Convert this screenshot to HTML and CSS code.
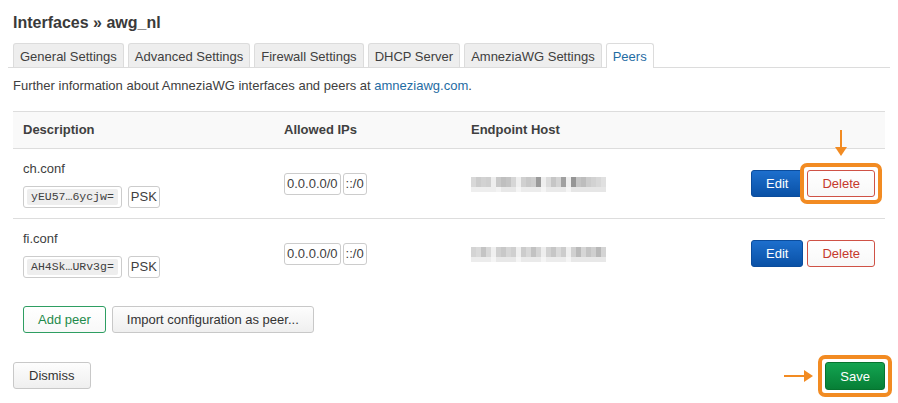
FILE: index.html
```html
<!DOCTYPE html>
<html>
<head>
<meta charset="utf-8">
<link rel="stylesheet" href="styles.css">
</head>
<body>
<div class="page">
  <h2 class="title">Interfaces » awg_nl</h2>
  <ul class="tabs">
    <li class="tab">General Settings</li>
    <li class="tab">Advanced Settings</li>
    <li class="tab">Firewall Settings</li>
    <li class="tab">DHCP Server</li>
    <li class="tab">AmneziaWG Settings</li>
    <li class="tab active">Peers</li>
  </ul>
  <p class="desc">Further information about AmneziaWG interfaces and peers at <a class="link" href="#">amneziawg.com</a>.</p>
  <table class="peers">
    <colgroup>
      <col class="c1"><col class="c2"><col class="c3"><col class="c4">
    </colgroup>
    <thead>
      <tr><th>Description</th><th>Allowed IPs</th><th>Endpoint Host</th><th></th></tr>
    </thead>
    <tbody>
      <tr>
        <td>
          <div class="peer-name">ch.conf</div>
          <div class="peer-keys"><span class="badge key"><code class="code">yEU57…6ycjw=</code></span><span class="badge">PSK</span></div>
        </td>
        <td><span class="ips"><span class="badge">0.0.0.0/0</span><span class="badge">::/0</span></span></td>
        <td><span class="blur blur-a"></span></td>
        <td class="actions-cell">
          <div class="row-actions">
            <button class="btn btn-edit">Edit</button>
            <span class="hl">
              <svg class="arrow-down" width="14" height="27" viewBox="0 0 14 27"><rect x="6" y="0" width="2" height="18" fill="#f28b22"/><polygon points="1,17 13,17 7,26" fill="#f28b22"/></svg>
              <span class="hl-box"></span>
              <button class="btn btn-delete">Delete</button>
            </span>
          </div>
        </td>
      </tr>
      <tr>
        <td>
          <div class="peer-name">fi.conf</div>
          <div class="peer-keys"><span class="badge key"><code class="code">AH4Sk…URv3g=</code></span><span class="badge">PSK</span></div>
        </td>
        <td><span class="ips"><span class="badge">0.0.0.0/0</span><span class="badge">::/0</span></span></td>
        <td><span class="blur blur-b"></span></td>
        <td class="actions-cell">
          <div class="row-actions">
            <button class="btn btn-edit">Edit</button>
            <button class="btn btn-delete">Delete</button>
          </div>
        </td>
      </tr>
    </tbody>
  </table>
  <div class="table-actions">
    <button class="btn btn-add">Add peer</button>
    <button class="btn btn-default">Import configuration as peer...</button>
  </div>
  <div class="footer">
    <button class="btn btn-default btn-dismiss">Dismiss</button>
    <span class="hl">
      <svg class="arrow-right" width="30" height="12" viewBox="0 0 30 12"><rect x="0" y="5" width="21" height="2" fill="#f28b22"/><polygon points="20,0 20,12 29,6" fill="#f28b22"/></svg>
      <span class="hl-box"></span>
      <button class="btn btn-save">Save</button>
    </span>
  </div>
</div>
</body>
</html>
```
FILE: styles.css
```css
* { box-sizing: border-box; }
html { overflow: hidden; }
html, body { margin: 0; padding: 0; background: #fff; }
body {
  font-family: "Liberation Sans", Arial, sans-serif;
  font-size: 13px;
  color: #404040;
}
.page { margin: 0 8px; padding-top: 13px; padding-bottom: 8px; }
.title {
  margin: 0 0 10px;
  padding: 0 5px;
  font-size: 16px;
  line-height: 20px;
  font-weight: bold;
  color: #3a3a3a;
}
.tabs {
  list-style: none;
  margin: 0;
  padding: 0 5px;
  display: flex;
  gap: 4px;
  border-bottom: 1px solid #dcdcdc;
}
.tab {
  background: #eeeeee;
  border: 1px solid #dcdcdc;
  border-bottom: none;
  border-radius: 3px 3px 0 0;
  padding: 5px 6px 2px;
  line-height: 16px;
  color: #404040;
}
.tab.active {
  background: #fff;
  color: #1f6ca3;
  margin-bottom: -1px;
  padding-bottom: 3px;
}
.desc {
  margin: 9px 5px 16px;
  line-height: 18px;
}
.link { color: #1f6ca3; text-decoration: none; }
.peers {
  margin: 0 5px;
  width: calc(100% - 10px);
  border-collapse: collapse;
  table-layout: fixed;
}
.c1 { width: 261px; }
.c2 { width: 187px; }
.c3 { width: 280px; }
.peers th {
  background: #f9f9f9;
  border-top: 1px solid #dddddd;
  padding: 10px;
  line-height: 16px;
  text-align: left;
  font-weight: bold;
}
.peers td {
  border-top: 1px solid #dddddd;
  padding: 10px;
  vertical-align: middle;
}
.peer-name { line-height: 20px; }
.peer-keys { display: flex; gap: 6px; margin-top: 7px; }
.badge {
  display: inline-block;
  border: 1px solid #cccccc;
  border-radius: 3px;
  padding: 2px;
  line-height: 16px;
  background: #fff;
}
.badge.key { padding: 2px 3px; }
.code {
  display: block;
  font-family: "Liberation Mono", "Courier New", monospace;
  font-size: 11.5px;
  line-height: 16px;
  background: #eeeeee;
  border-radius: 2px;
  padding: 0 4px;
  color: #404040;
}
.ips { display: inline-flex; gap: 2px; vertical-align: middle; }
.blur {
  display: inline-block;
  vertical-align: middle;
  width: 135px;
  height: 15px;
  background-repeat: no-repeat;
  background-size: 100% 10px, 100% 5px;
  background-position: top left, bottom left;
}
.blur-a {
  background-image:
    linear-gradient(to right, #d8d8d8 0 5px, #cccccc 5px 10px, #d2d2d2 10px 15px, #cfcfcf 15px 20px, #eeeeee 20px 25px, #c9c9c9 25px 30px, #bfbfbf 30px 35px, #c4c4c4 35px 40px, #d6d6d6 40px 45px, #efefef 45px 50px, #d0d0d0 50px 55px, #c8c8c8 55px 60px, #cdcdcd 60px 65px, #9a9a9a 65px 70px, #efefef 70px 75px, #dcdcdc 75px 80px, #c6c6c6 80px 85px, #d4d4d4 85px 90px, #a0a0a0 90px 95px, #eeeeee 95px 100px, #959595 100px 105px, #c4c4c4 105px 110px, #bdbdbd 110px 115px, #cccccc 115px 120px, #d2d2d2 120px 125px, #d8d8d8 125px 130px, #e0e0e0 130px 135px),
    linear-gradient(to right, #eeeeee 0 25px, #f3f3f3 25px 30px, #e8e8e8 30px 45px, #f5f5f5 45px 50px, #ececec 50px 70px, #f5f5f5 70px 75px, #eaeaea 75px 95px, #f5f5f5 95px 100px, #e6e6e6 100px 135px);
}
.blur-b {
  background-image:
    linear-gradient(to right, #d4d4d4 0 5px, #dadada 5px 10px, #c4c4c4 10px 15px, #d8d8d8 15px 20px, #f0f0f0 20px 25px, #d0d0d0 25px 30px, #c8c8c8 30px 35px, #d6d6d6 35px 40px, #cfcfcf 40px 45px, #efefef 45px 50px, #cccccc 50px 55px, #d8d8d8 55px 60px, #c2c2c2 60px 65px, #d4d4d4 65px 70px, #eeeeee 70px 75px, #d2d2d2 75px 80px, #c6c6c6 80px 85px, #dadada 85px 90px, #cccccc 90px 95px, #efefef 95px 100px, #d0d0d0 100px 105px, #bababa 105px 110px, #d6d6d6 110px 115px, #c4c4c4 115px 120px, #cfcfcf 120px 125px, #b8b8b8 125px 130px, #d4d4d4 130px 135px),
    linear-gradient(to right, #ececec 0 20px, #f5f5f5 20px 25px, #e8e8e8 25px 45px, #f5f5f5 45px 50px, #eaeaea 50px 70px, #f5f5f5 70px 75px, #ececec 75px 95px, #f5f5f5 95px 100px, #e8e8e8 100px 135px);
}
.actions-cell { text-align: right; }
.row-actions { display: inline-flex; gap: 4px; vertical-align: middle; }
.btn {
  font-family: "Liberation Sans", Arial, sans-serif;
  font-size: 13px;
  line-height: 15px;
  padding: 5px 14px;
  border: 1px solid #c8c8c8;
  border-radius: 3px;
  background: linear-gradient(#fdfdfd, #efefef);
  color: #333333;
  margin: 0;
  display: inline-block;
  vertical-align: top;
}
.btn-edit {
  background: linear-gradient(#1d6fcd, #0a51a6);
  border-color: #0b4c9c;
  color: #ffffff;
}
.btn-delete {
  background: linear-gradient(#ffffff, #f8f8f8);
  border-color: #cf5246;
  color: #c6392c;
}
.btn-add {
  background: linear-gradient(#ffffff, #f8f8f8);
  border-color: #2e9e62;
  color: #1e8a4b;
}
.btn-dismiss { padding: 5px 15px; }
.btn-save {
  background: linear-gradient(#13a451, #077f36);
  border-color: #06742f;
  color: #ffffff;
  padding: 6px 14px 5px;
}
.hl { position: relative; display: inline-block; line-height: 0; }
.hl-box {
  position: absolute;
  inset: -7px;
  border: 4px solid #f28b22;
  border-radius: 7px;
}
.arrow-down {
  position: absolute;
  left: 50%;
  top: -40px;
  margin-left: -7px;
  display: block;
}
.arrow-right {
  position: absolute;
  left: -41px;
  top: 50%;
  margin-top: -6px;
  display: block;
}
.table-actions {
  display: flex;
  gap: 6px;
  margin: 18px 15px 0;
}
.footer {
  display: flex;
  justify-content: space-between;
  align-items: flex-start;
  margin: 29px 5px 0;
}
```
